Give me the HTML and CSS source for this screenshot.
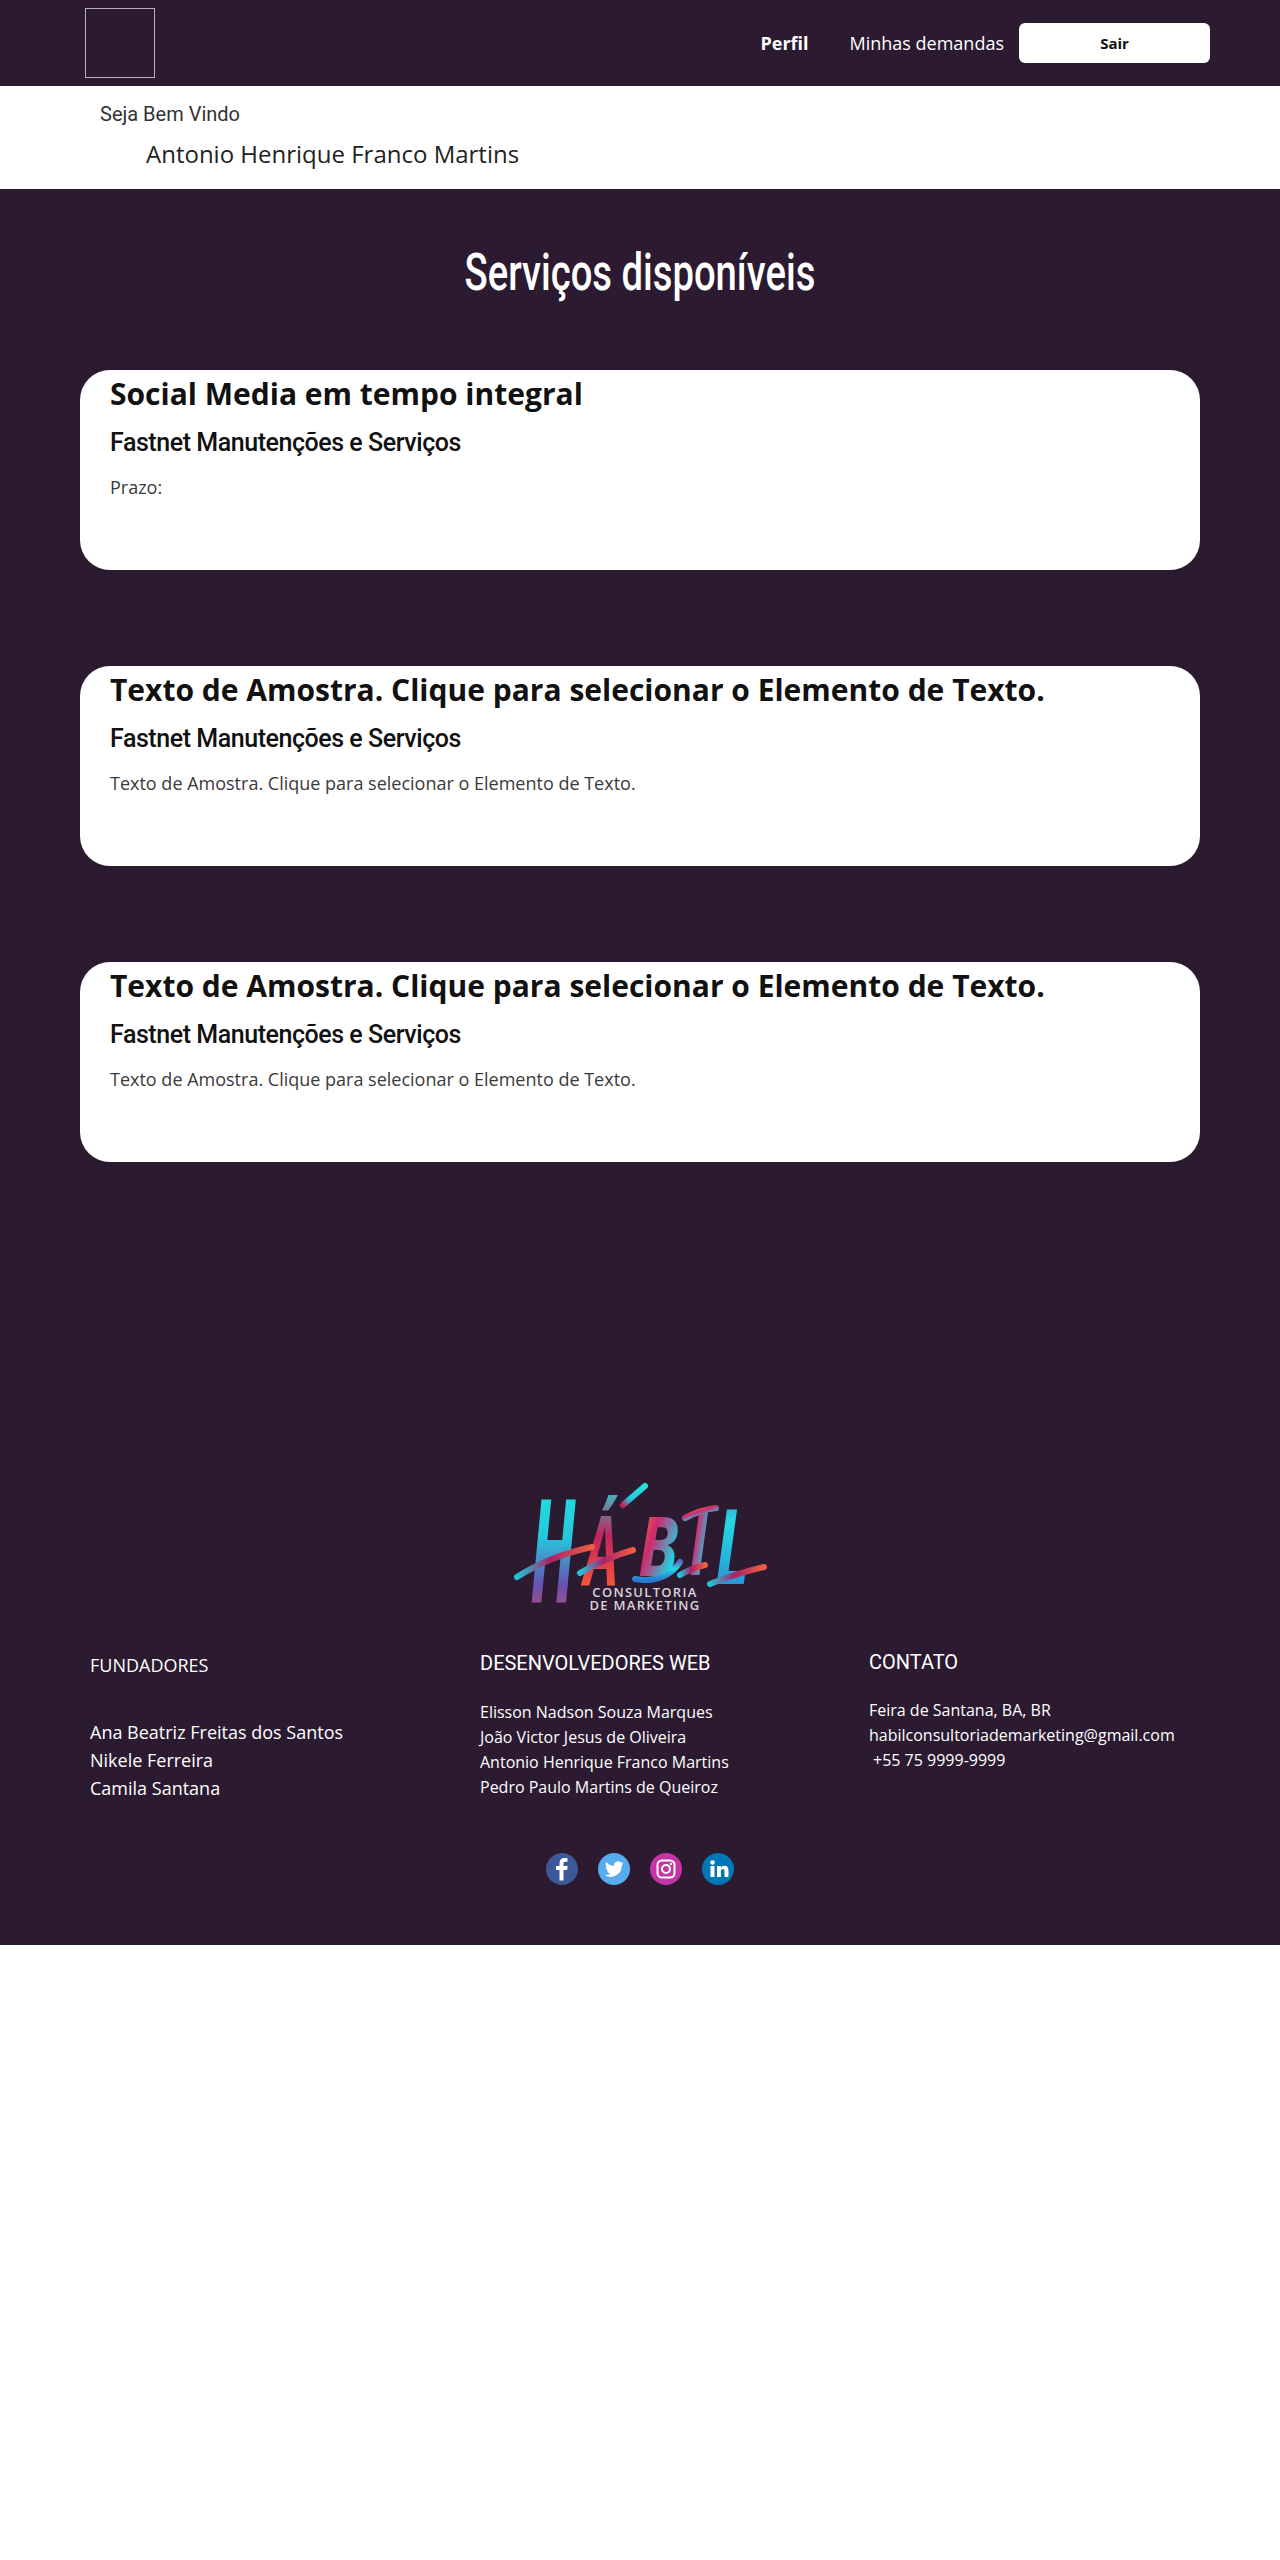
FILE: index.html
```html
<!DOCTYPE html>
<html lang="pt-BR">
<head>
    <meta charset="UTF-8">
    <meta name="viewport" content="width=device-width, initial-scale=1.0">
    <title>Serviços disponíveis</title>
    <link rel="stylesheet" href="styles.css">
</head>
<body>
    <!-- Top bar -->
    <header class="topbar">
        <div class="logo-box"></div>
        <nav class="nav">
            <a class="nav-link nav-active" href="#">Perfil</a>
            <a class="nav-link" href="#">Minhas demandas</a>
            <a class="btn-sair" href="#">Sair</a>
        </nav>
    </header>

    <!-- Welcome strip -->
    <section class="welcome">
        <p class="welcome-hello">Seja Bem Vindo</p>
        <p class="welcome-name">Antonio Henrique Franco Martins</p>
    </section>

    <main class="services">
        <h1 class="services-title">Serviços disponíveis</h1>

        <article class="card">
            <h2 class="card-title">Social Media em tempo integral</h2>
            <h3 class="card-company">Fastnet Manutenções e Serviços</h3>
            <p class="card-text">Prazo:</p>
        </article>

        <article class="card">
            <h2 class="card-title">Texto de Amostra. Clique para selecionar o Elemento de Texto.</h2>
            <h3 class="card-company">Fastnet Manutenções e Serviços</h3>
            <p class="card-text">Texto de Amostra. Clique para selecionar o Elemento de Texto.</p>
        </article>

        <article class="card">
            <h2 class="card-title">Texto de Amostra. Clique para selecionar o Elemento de Texto.</h2>
            <h3 class="card-company">Fastnet Manutenções e Serviços</h3>
            <p class="card-text">Texto de Amostra. Clique para selecionar o Elemento de Texto.</p>
        </article>
    </main>

    <footer class="footer">
        <svg class="footer-logo" width="260" height="210" viewBox="0 -40 260 210">
            <defs>
                <linearGradient id="brushA" x1="0" y1="0" x2="0" y2="1">
                    <stop offset="0" stop-color="#1ff0e0"/>
                    <stop offset="0.45" stop-color="#25c8dc"/>
                    <stop offset="0.7" stop-color="#6a4fb0"/>
                    <stop offset="1" stop-color="#f2503c"/>
                </linearGradient>
                <linearGradient id="brushB" x1="0" y1="0" x2="0" y2="1">
                    <stop offset="0" stop-color="#1fdcdc"/>
                    <stop offset="0.4" stop-color="#c0245e"/>
                    <stop offset="0.75" stop-color="#f0503c"/>
                    <stop offset="1" stop-color="#f59a20"/>
                </linearGradient>
                <linearGradient id="brushC" x1="0" y1="0" x2="1" y2="1">
                    <stop offset="0" stop-color="#f59a20"/>
                    <stop offset="0.4" stop-color="#d02a70"/>
                    <stop offset="0.75" stop-color="#22d0e0"/>
                    <stop offset="1" stop-color="#3a70d0"/>
                </linearGradient>
                <linearGradient id="brushD" x1="0" y1="0" x2="1" y2="0">
                    <stop offset="0" stop-color="#1fc6d8"/>
                    <stop offset="0.45" stop-color="#a8226c"/>
                    <stop offset="1" stop-color="#f0603c"/>
                </linearGradient>
                <linearGradient id="brushE" x1="0" y1="0" x2="0" y2="1">
                    <stop offset="0" stop-color="#5a6ac0"/>
                    <stop offset="0.35" stop-color="#25d8e4"/>
                    <stop offset="1" stop-color="#2a78d0"/>
                </linearGradient>
                <linearGradient id="brushF" x1="1" y1="0" x2="0" y2="1">
                    <stop offset="0" stop-color="#25e0dc"/>
                    <stop offset="0.7" stop-color="#25c8dc"/>
                    <stop offset="1" stop-color="#c0245e"/>
                </linearGradient>
            </defs>
            <!-- letters kept as real text -->
            <text class="logo-letter" transform="translate(20 122) scale(1.25 2.75)" fill="url(#brushA)">H</text>
            <text class="logo-letter" transform="translate(74 106) scale(1.05 1.85)" fill="url(#brushB)">Á</text>
            <text class="logo-letter" transform="translate(128 96) scale(1.25 1.6)" fill="url(#brushC)">B</text>
            <text class="logo-letter" transform="translate(179 95) scale(1.15 1.8)" fill="url(#brushC)">I</text>
            <text class="logo-letter" transform="translate(205 104) scale(1.3 2)" fill="url(#brushE)">L</text>
            <!-- brush swashes -->
            <path class="swash" d="M7 97 Q40 76 82 67" stroke="url(#brushD)"/>
            <path class="swash" d="M70 93 Q95 78 123 70" stroke="url(#brushD)"/>
            <path class="swash" d="M125 99 Q155 104 170 82" stroke="url(#brushE)"/>
            <path class="swash" d="M175 38 Q190 30 206 28" stroke="url(#brushC)"/>
            <path class="swash" d="M170 95 Q182 88 195 85" stroke="url(#brushD)"/>
            <path class="swash" d="M200 104 Q225 94 254 87" stroke="url(#brushD)"/>
            <path class="swash" d="M113 25 L135 6" stroke="url(#brushF)"/>
            <text class="logo-sub" x="135" y="117" text-anchor="middle">CONSULTORIA</text>
            <text class="logo-sub" x="135" y="130" text-anchor="middle">DE MARKETING</text>
        </svg>

        <div class="footer-cols">
            <div class="col col-founders">
                <h4 class="col-title">FUNDADORES</h4>
                <ul class="col-list">
                    <li>Ana Beatriz Freitas dos Santos</li>
                    <li>Nikele Ferreira</li>
                    <li>Camila Santana</li>
                </ul>
            </div>
            <div class="col col-devs">
                <h4 class="col-title">DESENVOLVEDORES WEB</h4>
                <ul class="col-list">
                    <li>Elisson Nadson Souza Marques</li>
                    <li>João Victor Jesus de Oliveira</li>
                    <li>Antonio Henrique Franco Martins</li>
                    <li>Pedro Paulo Martins de Queiroz</li>
                </ul>
            </div>
            <div class="col col-contact">
                <h4 class="col-title">CONTATO</h4>
                <ul class="col-list">
                    <li>Feira de Santana, BA, BR</li>
                    <li>habilconsultoriademarketing@gmail.com</li>
                    <li class="phone">+55 75 9999-9999</li>
                </ul>
            </div>
        </div>

        <!-- Social icons -->
        <div class="social">
            <svg width="32" height="32" viewBox="0 0 32 32"><circle cx="16" cy="16" r="16" fill="#3b5998"/><path d="M17.5 27.500V17h3.600l.5-4h-4.100v-2.400c0-1.200.4-1.900 2-1.900h2V5.200c-.6-.1-1.700-.2-3-.2-3 0-5 1.800-5 5.200V13H10v4h3.500v10.500z" fill="#fff"/></svg>
            <svg width="32" height="32" viewBox="0 0 32 32"><circle cx="16" cy="16" r="16" fill="#55acee"/><path d="M25.500 10.200c-.7.300-1.400.5-2.200.6.800-.5 1.400-1.200 1.700-2.100-.7.400-1.600.8-2.400.9a3.900 3.900 0 0 0-6.600 3.500c-3.200-.2-6-1.700-7.900-4-1 1.800-.5 4 1.200 5.200-.6 0-1.200-.2-1.700-.5 0 1.900 1.300 3.500 3.100 3.900-.6.200-1.200.2-1.800.1.500 1.500 1.900 2.600 3.600 2.700A7.800 7.800 0 0 1 6.700 22a11 11 0 0 0 17-9.800c.7-.5 1.300-1.200 1.800-2z" fill="#fff"/></svg>
            <svg width="32" height="32" viewBox="0 0 32 32"><circle cx="16" cy="16" r="16" fill="#c536a4"/><rect x="7.500" y="7.500" width="17" height="17" rx="4.500" fill="none" stroke="#fff" stroke-width="2"/><circle cx="16" cy="16" r="4" fill="none" stroke="#fff" stroke-width="2"/><circle cx="21" cy="11" r="1.200" fill="#fff"/></svg>
            <svg width="32" height="32" viewBox="0 0 32 32"><circle cx="16" cy="16" r="16" fill="#0077b5"/><circle cx="10.500" cy="9.500" r="2.300" fill="#fff"/><rect x="8.500" y="13" width="4" height="11" fill="#fff"/><path d="M15 13h3.800v1.600c.6-1 1.800-1.900 3.500-1.900 3 0 4.200 1.900 4.200 5V24h-4v-5.500c0-1.500-.4-2.500-1.700-2.500-1.400 0-1.900 1.100-1.900 2.500V24H15z" fill="#fff"/></svg>
        </div>
    </footer>
</body>
</html>
```

FILE: styles.css
```css
/* General body styling */
body {
    margin: 0;
    padding: 0;
    background: #fff;
    font-family: 'Open Sans', sans-serif;
    color: #111;
}

p, h1, h2, h3, h4, ul {
    margin: 0;
    padding: 0;
}

/* Top bar */
.topbar {
    height: 86px;
    background: #2b1a30;
    display: flex;
    align-items: center;
    justify-content: space-between;
    padding: 0 70px 0 85px;
    box-sizing: border-box;
}

.logo-box {
    width: 70px;
    height: 70px;
    box-sizing: border-box;
    border: 1px solid #b5b0b7;
}

.nav {
    display: flex;
    align-items: center;
}

.nav-link {
    color: #fff;
    font-size: 18px;
    text-decoration: none;
    margin-right: 15px;
}

.nav-active {
    font-weight: 700;
    margin-right: 41px;
}

.btn-sair {
    width: 191px;
    height: 40px;
    background: #fff;
    border-radius: 6px;
    color: #111;
    font-size: 15px;
    font-weight: 700;
    display: flex;
    align-items: center;
    justify-content: center;
    text-decoration: none;
}

/* Welcome strip */
.welcome {
    height: 103px;
    box-sizing: border-box;
    padding: 13px 0 0 100px;
}

.welcome-hello {
    font-family: Roboto, sans-serif;
    font-size: 20px;
    line-height: 30px;
    color: #333;
}

.welcome-name {
    font-size: 24px;
    line-height: 34px;
    margin: 8px 0 0 46px;
    color: #222;
}

/* Services */
.services {
    background: #2b1a30;
    height: 1206px;
    box-sizing: border-box;
    padding: 54px 80px 0;
}

.services-title {
    font-family: Roboto, sans-serif;
    font-weight: 500;
    font-size: 52px;
    line-height: 60px;
    color: #fff;
    text-align: center;
    margin-bottom: 67px;
    transform: scaleX(0.735);
}

.card {
    height: 200px;
    background: #fff;
    border-radius: 30px;
    box-sizing: border-box;
    padding: 4px 30px 0;
    margin-bottom: 96px;
}

.card-title {
    font-size: 30px;
    line-height: 40px;
    font-weight: 700;
    color: #111;
}

.card-company {
    font-family: Roboto, sans-serif;
    font-size: 25px;
    line-height: 30px;
    font-weight: 500;
    letter-spacing: -0.45px;
    color: #111;
    margin-top: 14px;
}

.card-text {
    font-size: 18px;
    line-height: 28px;
    color: #3a3a3a;
    margin-top: 15px;
}

/* Footer */
.footer {
    background: #2b1a30;
    height: 550px;
    box-sizing: border-box;
    color: #fff;
}

.footer-logo {
    display: block;
    margin: 0 auto -8px;
    padding-top: 45px;
}

.swash {
    fill: none;
    stroke-width: 6;
    stroke-linecap: round;
}

.logo-letter {
    font-family: 'Open Sans', sans-serif;
    font-style: italic;
    font-weight: 700;
    font-size: 52px;
}

.logo-sub {
    font-family: 'Open Sans', sans-serif;
    font-size: 13px;
    font-weight: 600;
    letter-spacing: 1.3px;
    fill: #d9d4da;
}

.footer-cols {
    display: flex;
    padding-left: 90px;
}

.col-title {
    font-weight: 400;
    font-size: 18px;
    line-height: 26px;
}

.col-list {
    list-style: none;
    font-size: 16px;
    line-height: 25px;
}

.col-founders { width: 390px; }
.col-devs { width: 389px; }

.col-founders .col-title { margin-top: 10px; }
.col-founders .col-list { font-size: 18px; line-height: 28px; margin-top: 40px; }

.col-devs .col-title { font-family: Roboto, sans-serif; font-size: 20px; margin-top: 8px; }
.col-devs .col-list { margin-top: 24px; }

.col-contact .col-title { font-family: Roboto, sans-serif; font-size: 20px; margin-top: 7px; }
.col-contact .col-list { margin-top: 23px; }

.phone { padding-left: 4px; }

/* Social icons */
.social {
    display: flex;
    justify-content: center;
    gap: 20px;
    margin-top: 51px;
}
```
